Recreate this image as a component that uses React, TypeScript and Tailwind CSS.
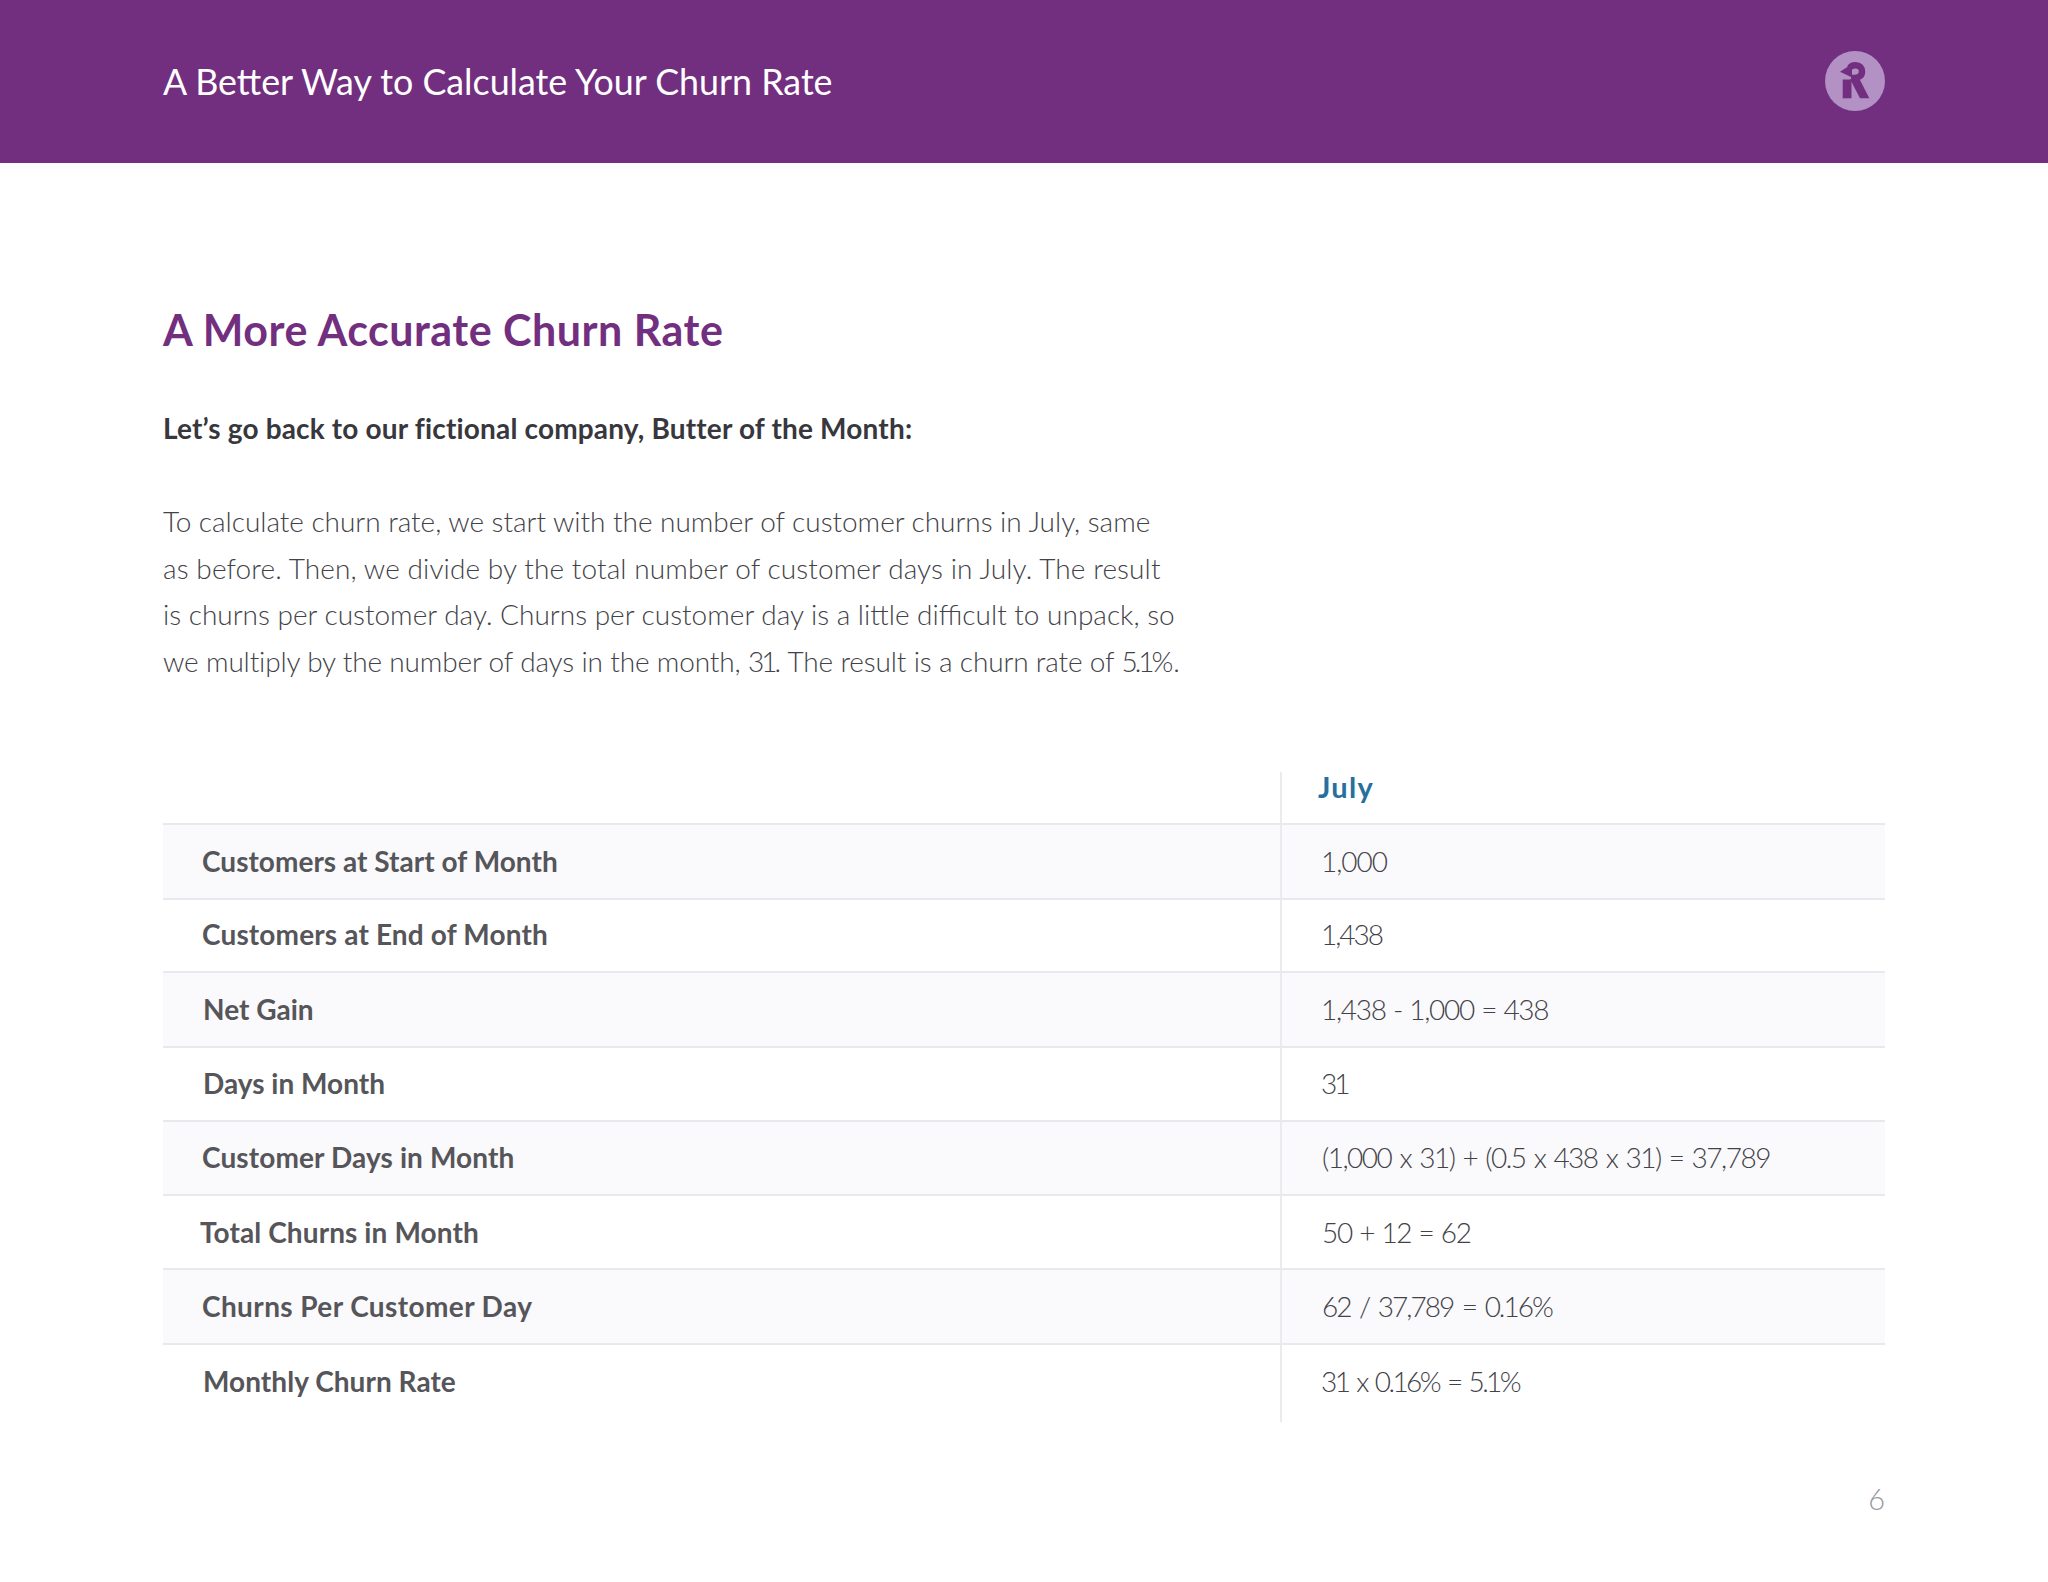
import React from 'react'

const rows = [
  { label: 'Customers at Start of Month', value: '1,000', h: 'h-[75px]', pl: 'pl-[39px]', vl: 'pl-[39px] tracking-[-1px]', lt: 'tracking-[0.03px]', nudge: '' },
  { label: 'Customers at End of Month', value: '1,438', h: 'h-[73px]', pl: 'pl-[39px]', vl: 'pl-[39px] tracking-[-2px]', lt: 'tracking-[0.15px]', nudge: 'pb-[2px]' },
  { label: 'Net Gain', value: '1,438 - 1,000 = 438', h: 'h-[75px]', pl: 'pl-[40px]', vl: 'pl-[39px] tracking-[-1.3px] [word-spacing:1px]', lt: 'tracking-normal', nudge: '' },
  { label: 'Days in Month', value: '31', h: 'h-[74px]', pl: 'pl-[40px]', vl: 'pl-[39px] tracking-[-3px]', lt: 'tracking-normal', nudge: 'pb-[1px]' },
  { label: 'Customer Days in Month', value: '(1,000 x 31) + (0.5 x 438 x 31) = 37,789', h: 'h-[74px]', pl: 'pl-[39px]', vl: 'pl-[40px] tracking-[-1.5px] [word-spacing:2px]', lt: 'tracking-[0.12px]', nudge: 'pb-[2px]' },
  { label: 'Total Churns in Month', value: '50 + 12 = 62', h: 'h-[74px]', pl: 'pl-[37px]', vl: 'pl-[40px] tracking-[-1.3px] [word-spacing:1px]', lt: 'tracking-[0.1px]', nudge: '' },
  { label: 'Churns Per Customer Day', value: '62 / 37,789 = 0.16%', h: 'h-[75px]', pl: 'pl-[39px]', vl: 'pl-[40px] tracking-[-2px] [word-spacing:3px]', lt: 'tracking-[0.4px]', nudge: '' },
  { label: 'Monthly Churn Rate', value: '31 x 0.16% = 5.1%', h: 'h-[77px]', pl: 'pl-[40px]', vl: 'pl-[39px] tracking-[-2.6px] [word-spacing:3px]', lt: 'tracking-[0.05px]', nudge: 'pb-[5px]', last: true },
]

const Logo = () => (
  <svg className="block mb-[2px]" width="60" height="60" viewBox="0 0 60 60">
    <circle cx="30" cy="30" r="30" fill="#b391c4" />
    <path d="M25 17C26 15 28 14.300 30.500 14.300C34.800 14.300 37 17 37 20.700C37 24.500 34 27 29 27H26" fill="none" stroke="#722f80" strokeWidth="6.500" />
    <path d="M15 20.700L27 13V26.500z" fill="#722f80" />
    <path d="M17.700 28.500H26.500V47.300H17.700z" fill="#722f80" />
    <path d="M25 28H34.500L44.300 47.300H35z" fill="#722f80" />
  </svg>
)

export default function App() {
  return (
    <div className="w-[2048px] h-[1582px] bg-white font-['Lato',sans-serif] text-[#424248] overflow-hidden">
      <header className="h-[163px] bg-[#722f80] flex items-center justify-between pl-[163px] pr-[163px]">
        <h2 className="text-[35.8px] font-normal text-white">A Better Way to Calculate Your Churn Rate</h2>
        <Logo />
      </header>

      <main className="px-[163px]">
        <h1 className="mt-[142px] text-[43px] leading-[50px] font-bold text-[#722f80] tracking-[0.5px]">A More Accurate Churn Rate</h1>
        <p className="mt-[55px] text-[28px] leading-[36px] font-bold text-[#37373d] tracking-[0.17px]">
          Let’s go back to our fictional company, Butter of the Month:
        </p>
        <p className="mt-[52px] text-[28px] leading-[46.7px] font-light w-[1100px]">
          <span className="tracking-[-0.03px]">To calculate churn rate, we start with the number of customer churns in July, same</span><br />
          <span className="tracking-[0.1px]">as before. Then, we divide by the total number of customer days in July. The result</span><br />
          <span>is churns per customer day. Churns per customer day is a little difficult to unpack, so</span><br />
          <span className="tracking-[-0.15px]">
            we multiply by the number of days in the month, <span className="tracking-[-3px]">31</span>. The result is a churn rate of{' '}
            <span className="tracking-[-3px]">5.1</span>%.
          </span>
        </p>

        <div className="mt-[87px]">
          <div className="grid grid-cols-[1119px_1fr] h-[53px] border-b-2 border-[#e9e8ed]">
            <div className="border-r-2 border-[#ebeaef]" />
            <div className="pl-[36px] text-[29px] font-bold text-[#26709e] leading-[30px] tracking-[1.3px]">July</div>
          </div>
          {rows.map((r, i) => (
            <div
              key={r.label}
              className={`grid grid-cols-[1119px_1fr] ${r.h} ${i % 2 === 0 ? 'bg-[#faf9fb]' : 'bg-white'} ${r.last ? '' : 'border-b-2 border-[#e9e8ed]'}`}
            >
              <div className={`flex items-center border-r-2 border-[#ebeaef] text-[28px] font-bold text-[#55555a] ${r.pl} ${r.lt} ${r.nudge}`}>
                {r.label}
              </div>
              <div className={`flex items-center text-[28px] font-light ${r.vl} ${r.nudge}`}>{r.value}</div>
            </div>
          ))}
        </div>

        <div className="mt-[61px] text-right text-[29px] leading-[32px] font-light text-[#97979b]">6</div>
      </main>
    </div>
  )
}
